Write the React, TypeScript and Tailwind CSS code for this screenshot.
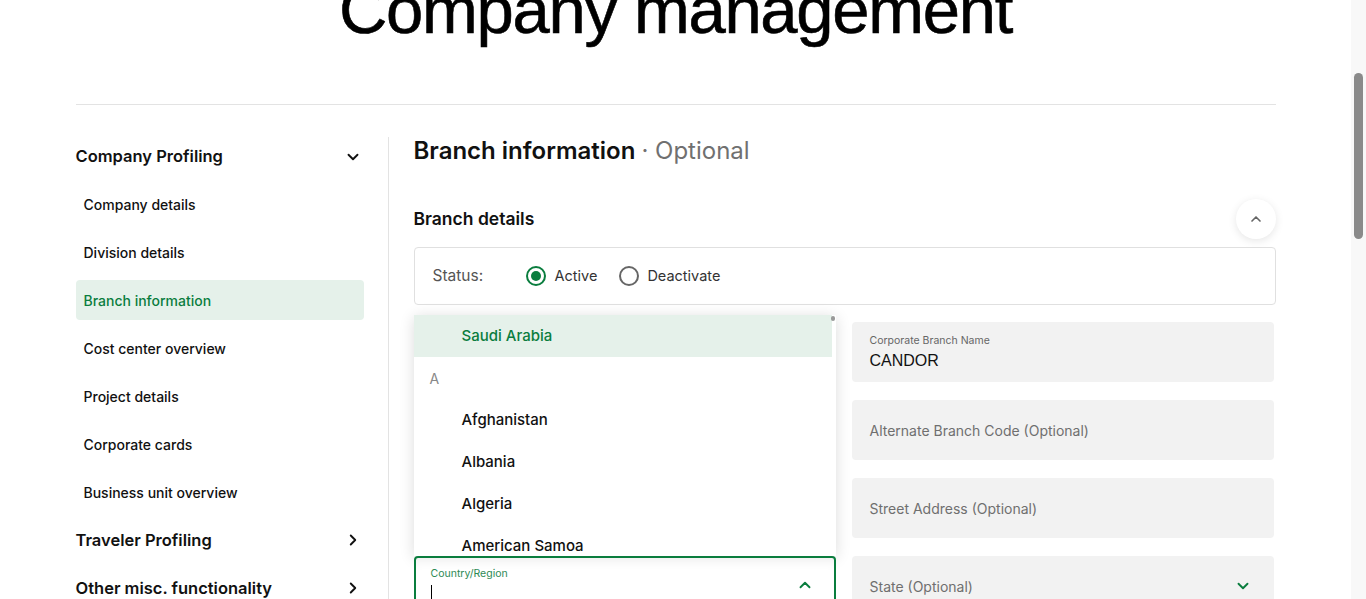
import { useLayoutEffect, useRef } from 'react'
import { ChevronDown, ChevronRight, ChevronUp } from 'lucide-react'

const companyItems = [
  'Company details',
  'Division details',
  'Branch information',
  'Cost center overview',
  'Project details',
  'Corporate cards',
  'Business unit overview',
]

const countries = ['Afghanistan', 'Albania', 'Algeria', 'American Samoa', 'Andorra']

function Field({ label, value, chevron }: { label?: string; value?: string; chevron?: boolean }) {
  return (
    <div className="flex h-[60px] items-center justify-between rounded bg-[#f2f2f2] px-[18px]">
      {value ? (
        <div className="flex flex-col">
          <span className="text-[10.5px] leading-[14px] text-[#666]">{label}</span>
          <span className="mt-[3px] font-['Liberation_Sans',sans-serif] text-[16px] leading-[20px] text-[#111]">{value}</span>
        </div>
      ) : (
        <span className="text-[14px] text-[#6f6f6f]">{label}</span>
      )}
      {chevron && <ChevronDown size={18} strokeWidth={2.5} className="mr-[4px] text-[#0a7d3e]" />}
    </div>
  )
}

export default function App() {
  const scroller = useRef<HTMLDivElement>(null)

  // page is shown scrolled down a bit, like the reference
  useLayoutEffect(() => {
    if (scroller.current) scroller.current.scrollTop = 70
  }, [])

  return (
    <div className="flex h-screen w-full bg-white font-['Inter','Noto_Sans',sans-serif] text-[#111]">
      <div ref={scroller} className="h-full flex-1 overflow-hidden">
        <div className="mx-auto w-[1200px] pb-20">
          <h1 className="pt-[48px] text-center font-['Liberation_Sans',Arial,sans-serif] text-[67px] leading-[64px] tracking-[-1.3px] text-black [-webkit-text-stroke:0.6px_black]">
            Company management
          </h1>
          <div className="mt-[62px] border-t border-[#e3e3e3]" />

          <div className="mt-8 flex">
            {/* sidebar */}
            <aside className="w-[313px] border-r border-[#e3e3e3] pr-6">
              <div className="flex flex-col gap-2">
                <div className="flex h-[39px] items-center justify-between pr-[2px]">
                  <span className="text-[16.5px] font-semibold">Company Profiling</span>
                  <ChevronDown size={18} strokeWidth={2.5} />
                </div>
                {companyItems.map(item => (
                  <div
                    key={item}
                    className={`flex h-10 items-center rounded px-2 text-[14px] font-medium ${
                      item === 'Branch information' ? 'bg-[#e5f1ea] text-[#0a7d3e]' : 'text-[#111]'
                    }`}
                  >
                    {item}
                  </div>
                ))}
                <div className="flex h-10 items-center justify-between pr-[2px]">
                  <span className="text-[16.5px] font-semibold">Traveler Profiling</span>
                  <ChevronRight size={18} strokeWidth={2.5} />
                </div>
                <div className="flex h-10 items-center justify-between pr-[2px]">
                  <span className="text-[16.5px] font-semibold">Other misc. functionality</span>
                  <ChevronRight size={18} strokeWidth={2.5} />
                </div>
              </div>
            </aside>

            {/* main */}
            <main className="flex-1 pl-[25px]">
              <h2 className="text-[24px] leading-[28px] font-semibold">
                Branch information <span className="font-normal text-[#707070]">· Optional</span>
              </h2>

              <div className="mt-[34px] flex h-10 items-center justify-between">
                <h3 className="text-[17.5px] font-semibold">Branch details</h3>
                <button className="flex h-10 w-10 items-center justify-center rounded-full bg-white shadow-[0_2px_8px_rgba(0,0,0,0.1)]">
                  <ChevronUp size={16} strokeWidth={2.5} className="text-[#666]" />
                </button>
              </div>

              <div className="mt-2 flex h-[58px] items-center rounded border border-[#e0e0e0] px-[18px] text-[15px] text-[#555]">
                <span className="w-[93px] text-[15.5px]">Status:</span>
                <label className="flex items-center">
                  <span className="flex h-5 w-5 items-center justify-center rounded-full border-2 border-[#0a7d3e]">
                    <span className="h-[10px] w-[10px] rounded-full bg-[#0a7d3e]" />
                  </span>
                  <span className="ml-[9px] text-[14.5px] text-[#333]">Active</span>
                </label>
                <label className="ml-[22px] flex items-center">
                  <span className="h-5 w-5 rounded-full border-2 border-[#666]" />
                  <span className="ml-2 text-[14.5px] text-[#333]">Deactivate</span>
                </label>
              </div>

              <div className="mt-[17px] grid grid-cols-2 gap-x-4 gap-y-[18px] pr-[2px]">
                <Field label="Corporate Branch Code" />
                <Field label="Corporate Branch Name" value="CANDOR" />
                <Field label="City (Optional)" />
                <Field label="Alternate Branch Code (Optional)" />
                <Field label="Zip Code (Optional)" />
                <Field label="Street Address (Optional)" />

                {/* country select, open upward */}
                <div className="relative">
                  <div className="absolute bottom-full left-0 z-10 h-[241px] w-full overflow-hidden bg-white shadow-[0_2px_14px_rgba(0,0,0,0.14)]">
                    <div className="flex pr-1">
                      <div className="flex-1">
                        <div className="flex h-[42px] items-center bg-[#e5f1ea] pl-12 text-[15px] font-medium text-[#0a7d3e]">
                          Saudi Arabia
                        </div>
                        <div className="flex h-[42px] items-center pl-4 text-[14px] text-[#888]">A</div>
                        {countries.map(c => (
                          <div key={c} className="flex h-[42px] items-center pl-12 text-[15px] font-medium">
                            {c}
                          </div>
                        ))}
                      </div>
                    </div>
                    <div className="absolute right-[1px] top-[1px] h-[5px] w-[4px] rounded-full bg-[#999]" />
                  </div>
                  <div className="relative z-20 flex h-[60px] justify-between rounded border-2 border-[#0a7d3e] bg-white pl-[15px] pr-[20px] shadow-[inset_0_10px_12px_-8px_rgba(0,0,0,0.08)]">
                    <div className="flex flex-col pt-[9px]">
                      <span className="text-[10.5px] leading-[14px] text-[#2e8a55]">Country/Region</span>
                      <span className="mt-[4px] h-[17px] w-px bg-black" />
                    </div>
                    <ChevronUp size={18} strokeWidth={2.5} className="mt-[18px] text-[#0a7d3e]" />
                  </div>
                </div>
                <Field label="State (Optional)" chevron />
              </div>
            </main>
          </div>
        </div>
      </div>

      {/* scrollbar */}
      <div className="flex w-[15px] shrink-0 justify-center bg-[#f8f8f8] pt-[73px]">
        <div className="h-[166px] w-[9px] rounded-full bg-[#8a8a8a]" />
      </div>
    </div>
  )
}
